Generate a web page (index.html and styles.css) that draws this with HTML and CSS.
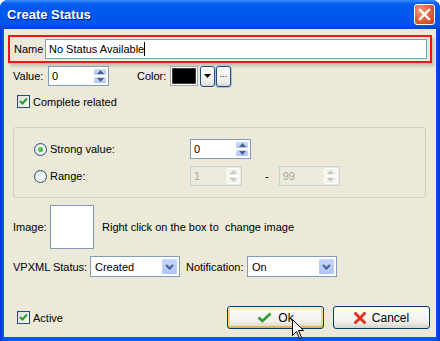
FILE: index.html
```html
<!DOCTYPE html>
<html lang="en">

<head>
    <meta charset="UTF-8">
    <title>Create Status</title>
    <link rel="stylesheet" href="styles.css">
</head>

<body>
    <div class="window">
        <!-- Title bar -->
        <div class="titlebar">
            <span class="title">Create Status</span>
            <div class="close">
                <svg width="13" height="13" viewBox="0 0 13 13"><path d="M2 2 L11 11 M11 2 L2 11" stroke="#fff" stroke-width="2.4" stroke-linecap="square"/></svg>
            </div>
        </div>

        <div class="client">
            <!-- Name -->
            <div class="name-row">
                <span class="name-lbl">Name</span>
                <div class="textbox name-box">No Status Available<span class="caret"></span></div>
            </div>

            <!-- Value / Color -->
            <div class="row value-row">
                <span class="lbl value-lbl">Value:</span>
                <div class="spin w61">
                    <span class="spin-val">0</span>
                    <div class="spin-btns">
                        <div class="spin-btn"><svg width="7" height="4" viewBox="0 0 7 4"><path d="M0 4 L3.5 0 L7 4 Z" fill="#4D6185"/></svg></div>
                        <div class="spin-btn"><svg width="7" height="4" viewBox="0 0 7 4"><path d="M0 0 L3.5 4 L7 0 Z" fill="#4D6185"/></svg></div>
                    </div>
                </div>
                <span class="lbl color-lbl">Color:</span>
                <div class="swatch-frame"><div class="swatch"></div></div>
                <div class="mini-btn">
                    <svg width="7" height="4" viewBox="0 0 7 4"><path d="M0 0 L7 0 L3.5 4 Z" fill="#000"/></svg>
                </div>
                <div class="mini-btn dots">...</div>
            </div>

            <!-- Complete related -->
            <div class="row check-row related">
                <div class="checkbox">
                    <svg width="9" height="9" viewBox="0 0 9 9"><path d="M1 4 L3.5 6.5 L8 1.5" stroke="#21A121" stroke-width="2" fill="none"/></svg>
                </div>
                <span>Complete related</span>
            </div>

            <!-- Value group -->
            <div class="group">
                <div class="row group-row">
                    <div class="radio-item">
                        <div class="radio checked"><span class="dot"></span></div>
                        <span>Strong value:</span>
                    </div>
                    <div class="spin w61">
                        <span class="spin-val">0</span>
                        <div class="spin-btns">
                            <div class="spin-btn"><svg width="7" height="4" viewBox="0 0 7 4"><path d="M0 4 L3.5 0 L7 4 Z" fill="#4D6185"/></svg></div>
                            <div class="spin-btn"><svg width="7" height="4" viewBox="0 0 7 4"><path d="M0 0 L3.5 4 L7 0 Z" fill="#4D6185"/></svg></div>
                        </div>
                    </div>
                </div>
                <div class="row group-row range">
                    <div class="radio-item">
                        <div class="radio"></div>
                        <span>Range:</span>
                    </div>
                    <div class="spin disabled w52">
                        <span class="spin-val">1</span>
                        <div class="spin-btns">
                            <div class="spin-btn"><svg width="7" height="4" viewBox="0 0 7 4"><path d="M0 4 L3.5 0 L7 4 Z" fill="#C9C7BA"/></svg></div>
                            <div class="spin-btn"><svg width="7" height="4" viewBox="0 0 7 4"><path d="M0 0 L3.5 4 L7 0 Z" fill="#C9C7BA"/></svg></div>
                        </div>
                    </div>
                    <span class="dash">-</span>
                    <div class="spin disabled w61">
                        <span class="spin-val">99</span>
                        <div class="spin-btns">
                            <div class="spin-btn"><svg width="7" height="4" viewBox="0 0 7 4"><path d="M0 4 L3.5 0 L7 4 Z" fill="#C9C7BA"/></svg></div>
                            <div class="spin-btn"><svg width="7" height="4" viewBox="0 0 7 4"><path d="M0 0 L3.5 4 L7 0 Z" fill="#C9C7BA"/></svg></div>
                        </div>
                    </div>
                </div>
            </div>

            <!-- Image -->
            <div class="row image-row">
                <span class="lbl image-lbl">Image:</span>
                <div class="image-box"></div>
                <span class="image-hint">Right click on the box to&nbsp; change image</span>
            </div>

            <!-- VPXML / Notification -->
            <div class="row select-row">
                <span class="lbl vpxml-lbl">VPXML Status:</span>
                <div class="select">
                    <span class="select-val">Created</span>
                    <div class="select-btn"><svg width="9" height="6" viewBox="0 0 9 6"><path d="M1 1 L4.5 4.5 L8 1" stroke="#4D6185" stroke-width="2" fill="none"/></svg></div>
                </div>
                <span class="lbl notif-lbl">Notification:</span>
                <div class="select">
                    <span class="select-val">On</span>
                    <div class="select-btn"><svg width="9" height="6" viewBox="0 0 9 6"><path d="M1 1 L4.5 4.5 L8 1" stroke="#4D6185" stroke-width="2" fill="none"/></svg></div>
                </div>
            </div>

            <!-- Bottom -->
            <div class="row bottom-row">
                <div class="row check-row">
                    <div class="checkbox">
                        <svg width="9" height="9" viewBox="0 0 9 9"><path d="M1 4 L3.5 6.5 L8 1.5" stroke="#21A121" stroke-width="2" fill="none"/></svg>
                    </div>
                    <span class="active-lbl">Active</span>
                </div>
                <div class="buttons">
                    <div class="btn focused">
                        <svg width="15" height="11" viewBox="0 0 15 11"><path d="M1.5 5.5 L5.5 9 L13.5 1.5" stroke="#2E9E2E" stroke-width="2.6" fill="none"/></svg>
                        <span>Ok</span>
                    </div>
                    <div class="btn">
                        <svg width="12" height="12" viewBox="0 0 12 12"><path d="M1.5 1.5 L10.5 10.5 M10.5 1.5 L1.5 10.5" stroke="#E5321E" stroke-width="3" stroke-linecap="round"/></svg>
                        <span>Cancel</span>
                    </div>
                </div>
            </div>
        </div>

        <!-- mouse pointer over the Ok button -->
        <svg class="cursor" width="13" height="21" viewBox="0 0 13 21"><path d="M0.5 0.5 L0.5 16.5 L4.5 12.5 L7.5 19.5 L9.5 18.5 L6.5 11.5 L11.5 11.5 Z" fill="#fff" stroke="#000" stroke-width="1"/></svg>
    </div>
</body>

</html>
```

FILE: styles.css
```css
/* XP style dialog */

* {
    box-sizing: border-box;
}

body {
    margin: 0;
    padding: 0;
    font-family: "Liberation Sans", Arial, sans-serif;
    font-size: 11px;
    color: #000;
}

.window {
    position: relative;
    width: 440px;
    height: 341px;
    background: linear-gradient(to right, #0831D9, #0855E6 3px, #0855E6 436px, #0831D9);
    border-radius: 8px 8px 0 0;
    display: flex;
    flex-direction: column;
    overflow: hidden;
}

.titlebar {
    height: 29px;
    flex: none;
    display: flex;
    align-items: center;
    justify-content: space-between;
    padding: 0 5px 0 7px;
    background: linear-gradient(to bottom, #3A8CFF 0%, #0A62F0 12%, #0058EE 25%, #0058EE 55%, #0054E8 85%, #0043CF 100%);
}

.title {
    color: #fff;
    font-weight: bold;
    font-size: 13px;
    text-shadow: 1px 1px 0 #0A1E8C;
}

.close {
    width: 21px;
    height: 21px;
    border: 1px solid #fff;
    border-radius: 3px;
    background: radial-gradient(circle at 30% 30%, #F0A080, #E2643A 45%, #C7401A);
    display: flex;
    align-items: center;
    justify-content: center;
}

.client {
    flex: 1;
    margin: 0 4px 4px;
    background: #ECE9D8;
    display: flex;
    flex-direction: column;
}

.row {
    display: flex;
    align-items: center;
}

.lbl {
    white-space: nowrap;
}

/* Name */
.name-row {
    margin: 6px 0 0 4px;
    width: 424px;
    height: 28px;
    border: 2px solid #F21414;
    box-shadow: 2px 3px 3px rgba(0, 0, 0, 0.18);
    display: flex;
    align-items: center;
    padding-left: 4px;
}

.name-lbl {
    width: 31px;
}

.textbox {
    height: 20px;
    border: 1px solid #7F9DB9;
    background: #fff;
    display: flex;
    align-items: center;
    padding-left: 3px;
}

.name-box {
    width: 382px;
}

.caret {
    width: 1px;
    height: 14px;
    background: #000;
}

/* Value row */
.value-row {
    margin: 3px 0 0 9px;
    height: 20px;
}

.value-lbl {
    width: 35px;
}

.spin {
    height: 20px;
    border: 1px solid #7F9DB9;
    background: #fff;
    display: flex;
}

.w61 {
    width: 61px;
}

.w52 {
    width: 52px;
}

.spin-val {
    flex: 1;
    padding-left: 3px;
    display: flex;
    align-items: center;
}

.spin-btns {
    width: 16px;
    padding: 1px;
    display: flex;
    flex-direction: column;
}

.spin-btn {
    flex: 1;
    background: linear-gradient(to bottom, #CCDBFC, #B1C7F6);
    border: 1px solid #fff;
    border-radius: 2px;
    display: flex;
    align-items: center;
    justify-content: center;
}

.spin.disabled {
    background: #EBEADB;
    border-color: #C9D1DD;
    color: #ACA899;
}

.spin.disabled .spin-btn {
    background: #F3F2EC;
    border-color: #fff;
}

.color-lbl {
    margin-left: 28px;
    width: 33px;
}

.swatch-frame {
    width: 28px;
    height: 20px;
    border: 1px solid #A7A6AA;
    background: #fff;
    padding: 1px;
}

.swatch {
    width: 100%;
    height: 100%;
    background: #000;
    border: 1px solid #404040;
}

.mini-btn {
    width: 15px;
    height: 21px;
    margin-left: 2px;
    border: 1px solid #1C4E8A;
    border-radius: 3px;
    background: linear-gradient(to bottom, #fff, #ECEBE6 85%, #D6D0C5);
    display: flex;
    align-items: center;
    justify-content: center;
    line-height: 1;
}

.mini-btn.dots {
    margin-left: 1px;
    font-size: 9px;
    padding-bottom: 3px;
    box-shadow: 0 0 0 1px #A9C3E8;
}

/* Checkboxes */
.check-row {
    gap: 3px;
}

.related {
    margin: 9px 0 0 13px;
}

.checkbox {
    width: 13px;
    height: 13px;
    border: 1px solid #1C5180;
    background: linear-gradient(135deg, #DCDCD7, #fff);
    display: flex;
    align-items: center;
    justify-content: center;
}

/* Group box */
.group {
    margin: 19px 0 0 9px;
    width: 413px;
    height: 71px;
    border: 1px solid #D0D0BF;
    border-radius: 3px;
    padding: 11px 0 0 20px;
}

.group-row {
    height: 20px;
}

.group-row.range {
    margin-top: 7px;
}

.radio-item {
    width: 156px;
    display: flex;
    align-items: center;
    gap: 3px;
}

.radio {
    width: 13px;
    height: 13px;
    border: 1px solid #1C5180;
    border-radius: 50%;
    background: radial-gradient(circle at 60% 60%, #fff, #DCDCD3);
    display: flex;
    align-items: center;
    justify-content: center;
}

.dot {
    width: 5px;
    height: 5px;
    border-radius: 50%;
    background: radial-gradient(circle at 40% 40%, #5EDA5E, #21A121);
}

.dash {
    margin: 0 10px 0 23px;
}

/* Image */
.image-row {
    margin: 7px 0 0 9px;
}

.image-lbl {
    width: 37px;
}

.image-box {
    width: 44px;
    height: 44px;
    border: 1px solid #7F9DB9;
    background: #fff;
}

.image-hint {
    margin-left: 8px;
}

/* Selects */
.select-row {
    margin: 7px 0 0 9px;
}

.vpxml-lbl {
    width: 77px;
}

.notif-lbl {
    margin-left: 6px;
    width: 61px;
}

.select {
    width: 90px;
    height: 21px;
    border: 1px solid #7F9DB9;
    background: #fff;
    display: flex;
    padding: 1px;
}

.select-val {
    flex: 1;
    padding-left: 3px;
    display: flex;
    align-items: center;
}

.select-btn {
    width: 17px;
    background: linear-gradient(to bottom, #C6D7FC, #AFC5F7);
    border: 1px solid #fff;
    border-radius: 2px;
    display: flex;
    align-items: center;
    justify-content: center;
}

/* Bottom */
.bottom-row {
    margin: auto 0 8px 13px;
    justify-content: space-between;
}

.buttons {
    display: flex;
    gap: 9px;
    margin-right: 6px;
}

.btn {
    width: 97px;
    height: 23px;
    border: 1px solid #003C74;
    border-radius: 3px;
    background: linear-gradient(to bottom, #fff, #F0EFEA 70%, #D8D2C6);
    display: flex;
    align-items: center;
    justify-content: center;
    gap: 6px;
    font-size: 12px;
}

.btn.focused {
    box-shadow: inset 0 2px 0 #FFEFC4, inset 0 -2px 0 #F3B23F, inset 2px 0 0 #FAD588, inset -2px 0 0 #FAD588;
}

.cursor {
    position: absolute;
    left: 292px;
    top: 319px;
}
```
